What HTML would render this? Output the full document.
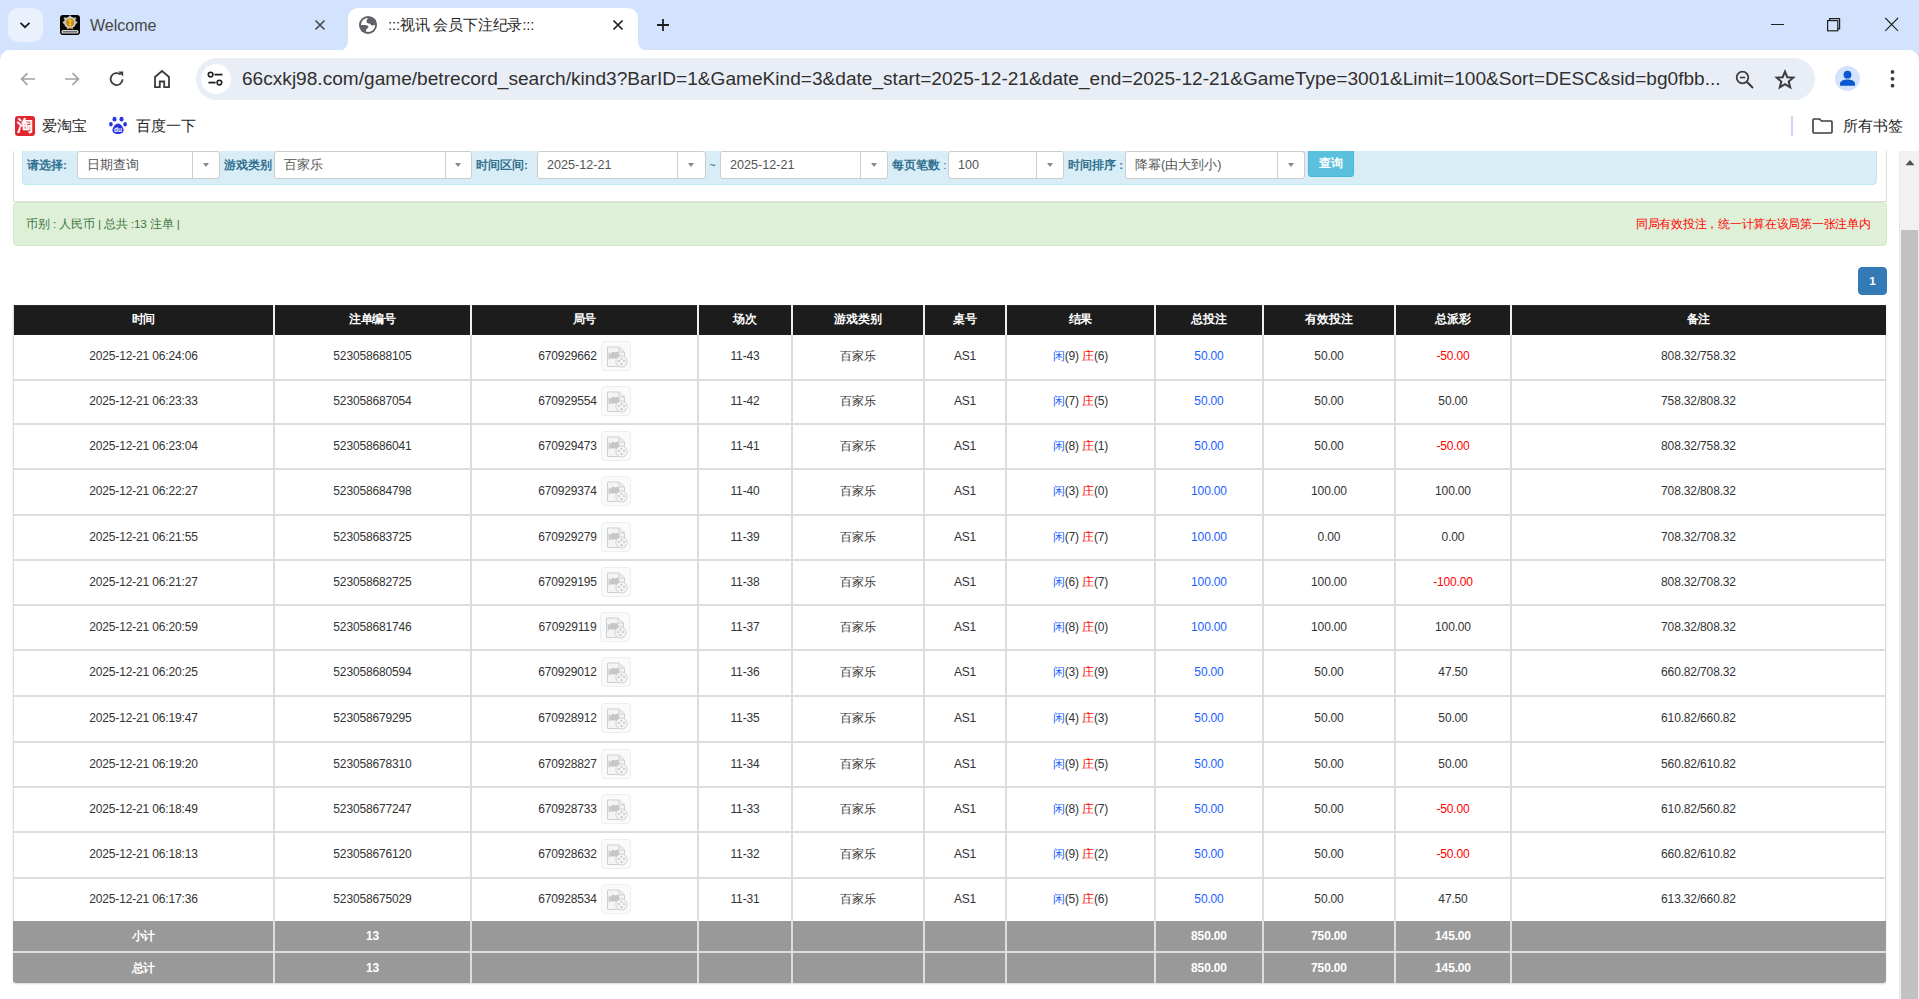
<!DOCTYPE html>
<html><head><meta charset="utf-8"><title>:::视讯 会员下注纪录:::</title>
<style>
*{box-sizing:border-box}
html,body{margin:0;padding:0}
body{width:1919px;height:999px;overflow:hidden;position:relative;background:#fff;font-family:"Liberation Sans",sans-serif;color:#333}
.a{position:absolute}
.t{position:absolute;white-space:nowrap;line-height:1}
.c{position:absolute;display:flex;align-items:center;justify-content:center;white-space:nowrap;font-size:12px;letter-spacing:-0.15px;line-height:1}
.hd{color:#fff;font-weight:bold}
.lbl{position:absolute;font-size:11.7px;font-weight:bold;color:#31708f;white-space:nowrap;line-height:1}
.sel{position:absolute;background:#fff;border:1px solid #ccc;border-radius:3px;font-size:12.6px;color:#555}
.sel span{position:absolute;left:9px;top:0;bottom:0;display:flex;align-items:center;white-space:nowrap}
.sel i{position:absolute;top:-1px;bottom:-1px;width:1px;background:#ccc}
.sel b{position:absolute;width:0;height:0;border-left:3.5px solid transparent;border-right:3.5px solid transparent;border-top:4px solid #888}
</style></head><body>

<div class="a" style="left:0;top:0;width:1919px;height:62px;background:#d3e3fd"></div>
<div class="a" style="left:8px;top:8px;width:35px;height:34px;border-radius:10px;background:#eaf1fd"></div>
<svg class="a" style="left:19px;top:19px" width="12" height="12" viewBox="0 0 12 12"><path d="M1.5 3.8 L6 8.2 L10.5 3.8" fill="none" stroke="#1f1f1f" stroke-width="1.8"/></svg>
<svg class="a" style="left:60px;top:15px" width="20" height="20" viewBox="0 0 20 20"><rect x="0" y="0" width="20" height="20" rx="3" fill="#050505"/><g fill="#c9c9c9"><circle cx="10" cy="7.5" r="6"/><rect x="9" y="0.6" width="2" height="2.5"/><rect x="2.8" y="6.5" width="2.5" height="2"/><rect x="14.7" y="6.5" width="2.5" height="2"/><rect x="4" y="2.5" width="2" height="2" transform="rotate(45 5 3.5)"/><rect x="14" y="2.5" width="2" height="2" transform="rotate(45 15 3.5)"/></g><circle cx="10" cy="7.5" r="4" fill="#c58a0c"/><path d="M8.3 5.2 Q10.8 4.6 11.2 6.4 Q9 7 10.6 8.8 Q11.6 9.8 9 10.2" fill="none" stroke="#f5d03a" stroke-width="1.2"/><circle cx="7.8" cy="13.2" r="1" fill="#e0a81a"/><circle cx="12.2" cy="13.2" r="1" fill="#e0a81a"/><rect x="1.5" y="15" width="17" height="3.5" rx="1.5" fill="#d6d6d6"/><rect x="3" y="16.2" width="14" height="1.2" fill="#555"/></svg>
<div class="t" style="left:90px;top:18px;font-size:16px;color:#474747">Welcome</div>
<svg class="a" style="left:314px;top:19px" width="12" height="12" viewBox="0 0 12 12"><path d="M1.5 1.5 L10.5 10.5 M10.5 1.5 L1.5 10.5" stroke="#474747" stroke-width="1.6"/></svg>
<div class="a" style="left:348px;top:8px;width:290px;height:43px;background:#fff;border-radius:10px 10px 0 0"></div>
<svg class="a" style="left:338px;top:40px" width="10" height="11" viewBox="0 0 10 10"><path d="M0 10 Q10 10 10 0 L10 10 Z" fill="#fff"/></svg>
<svg class="a" style="left:638px;top:40px" width="10" height="11" viewBox="0 0 10 10"><path d="M10 10 Q0 10 0 0 L0 10 Z" fill="#fff"/></svg>
<svg class="a" style="left:359px;top:16px" width="18" height="18" viewBox="0 0 18 18"><circle cx="9" cy="9" r="9" fill="#5f6368"/><circle cx="9" cy="9" r="7.1" fill="#fff"/><path d="M10.3 1.5 C8.4 2.4 7.5 3.8 7.5 5.4 C7.5 6.9 8.7 7.4 10.3 7.6 C11.3 7.8 11.6 9.3 13 9.5 C14.3 9.6 15.4 9.2 16.4 8.6 L17 4 L13 1 Z" fill="#5f6368"/><path d="M1.2 9.1 C3.5 9.1 6.3 8.9 8.1 9.4 C9.7 9.9 9.9 11.5 8.6 12.2 C7.3 12.8 6.9 13.6 6.9 16.5 L2 15 Z" fill="#5f6368"/></svg>
<div class="t" style="left:388px;top:17px;font-size:15px;color:#1f1f1f;letter-spacing:-0.2px">:::视讯 会员下注纪录:::</div>
<svg class="a" style="left:612px;top:19px" width="12" height="12" viewBox="0 0 12 12"><path d="M1.5 1.5 L10.5 10.5 M10.5 1.5 L1.5 10.5" stroke="#1f1f1f" stroke-width="1.7"/></svg>
<svg class="a" style="left:656px;top:18px" width="14" height="14" viewBox="0 0 14 14"><path d="M7 1 V13 M1 7 H13" stroke="#1f1f1f" stroke-width="1.8"/></svg>
<div class="a" style="left:1771px;top:24px;width:13px;height:1px;background:#1f1f1f"></div>
<svg class="a" style="left:1826px;top:17px" width="15" height="15" viewBox="0 0 15 15"><rect x="1.6" y="3.6" width="10.2" height="10.2" fill="none" stroke="#1f1f1f" stroke-width="1.2"/><path d="M3.6 3.6 V1.6 H13.6 V11.8 H11.8" fill="none" stroke="#1f1f1f" stroke-width="1.2"/></svg>
<svg class="a" style="left:1884px;top:17px" width="15" height="15" viewBox="0 0 15 15"><path d="M1.3 1 L14 13.8 M14 1 L1.3 13.8" stroke="#1f1f1f" stroke-width="1.1"/></svg>
<div class="a" style="left:0;top:50px;width:1919px;height:101px;background:#fff;border-radius:10px 10px 0 0"></div>
<svg class="a" style="left:19px;top:70px" width="18" height="18" viewBox="0 0 18 18"><path d="M16 9 H3 M8.5 3.2 L2.6 9 L8.5 14.8" fill="none" stroke="#a3a3a3" stroke-width="1.7"/></svg>
<svg class="a" style="left:63px;top:70px" width="18" height="18" viewBox="0 0 18 18"><path d="M2 9 H15 M9.5 3.2 L15.4 9 L9.5 14.8" fill="none" stroke="#a3a3a3" stroke-width="1.7"/></svg>
<svg class="a" style="left:108px;top:70px" width="18" height="18" viewBox="0 0 18 18"><path d="M14.6 9.2 A6 6 0 1 1 12.6 4.6" fill="none" stroke="#3c3c3c" stroke-width="1.8"/><path d="M10.2 1.6 H15.2 V6.6 Z" fill="#3c3c3c"/></svg>
<svg class="a" style="left:153px;top:69px" width="18" height="20" viewBox="0 0 18 20"><path d="M2 18.2 V8 L9 2 L16 8 V18.2 H11.2 V12.5 H6.8 V18.2 Z" fill="none" stroke="#3c3c3c" stroke-width="1.8" stroke-linejoin="miter"/></svg>
<div class="a" style="left:196px;top:58px;width:1619px;height:42px;border-radius:21px;background:#e9eef6"></div>
<div class="a" style="left:201px;top:64px;width:30px;height:30px;border-radius:50%;background:#fff"></div>
<svg class="a" style="left:207px;top:71px" width="18" height="16" viewBox="0 0 18 16"><circle cx="3.6" cy="3.6" r="2.3" fill="none" stroke="#1f1f1f" stroke-width="1.6"/><path d="M7.5 3.6 H15.5" stroke="#1f1f1f" stroke-width="1.8"/><circle cx="12.4" cy="11.6" r="2.3" fill="none" stroke="#1f1f1f" stroke-width="1.6"/><path d="M1.5 11.6 H8.6" stroke="#1f1f1f" stroke-width="1.8"/></svg>
<div class="t" style="left:242px;top:69px;font-size:19.1px;color:#303030">66cxkj98.com/game/betrecord_search/kind3?BarID=1&amp;GameKind=3&amp;date_start=2025-12-21&amp;date_end=2025-12-21&amp;GameType=3001&amp;Limit=100&amp;Sort=DESC&amp;sid=bg0fbb...</div>
<svg class="a" style="left:1735px;top:70px" width="20" height="20" viewBox="0 0 20 20"><circle cx="7.5" cy="7.5" r="5.8" fill="none" stroke="#3c3c3c" stroke-width="1.8"/><path d="M4.8 7.5 H10.2" stroke="#3c3c3c" stroke-width="1.6"/><path d="M11.8 11.8 L18 18" stroke="#3c3c3c" stroke-width="2"/></svg>
<svg class="a" style="left:1774px;top:69px" width="22" height="21" viewBox="0 0 22 21"><path d="M11 2.6 L13.3 8.2 L19.3 8.6 L14.7 12.5 L16.2 18.4 L11 15.2 L5.8 18.4 L7.3 12.5 L2.7 8.6 L8.7 8.2 Z" fill="none" stroke="#3c3c3c" stroke-width="2" stroke-linejoin="miter"/></svg>
<div class="a" style="left:1835px;top:66px;width:25px;height:25px;border-radius:50%;background:#d3e3fd"></div>
<svg class="a" style="left:1839px;top:70px" width="17" height="17" viewBox="0 0 17 17"><circle cx="8.5" cy="4.7" r="3.9" fill="#0b57d0"/><path d="M1 15.7 V13.6 C1 10.8 5 9.4 8.5 9.4 C12 9.4 16 10.8 16 13.6 V15.7 Z" fill="#0b57d0"/></svg>
<svg class="a" style="left:1888px;top:69px" width="9" height="20" viewBox="0 0 9 20"><circle cx="4.5" cy="2.9" r="1.9" fill="#3c3c3c"/><circle cx="4.5" cy="9.8" r="1.9" fill="#3c3c3c"/><circle cx="4.5" cy="16.7" r="1.9" fill="#3c3c3c"/></svg>
<div class="a" style="left:15px;top:116px;width:20px;height:20px;border-radius:3px;background:#e0262e"></div>
<div class="t" style="left:16px;top:117px;font-size:16px;color:#fff;font-weight:bold;width:18px;text-align:center;line-height:18px">淘</div>
<div class="t" style="left:42px;top:118px;font-size:15px;color:#1f1f1f">爱淘宝</div>
<svg class="a" style="left:109px;top:116px" width="18" height="19" viewBox="0 0 18 19"><ellipse cx="5.5" cy="3.2" rx="2" ry="2.4" fill="#2932e1"/><ellipse cx="12.5" cy="3.2" rx="2" ry="2.4" fill="#2932e1"/><ellipse cx="1.9" cy="8.2" rx="1.8" ry="2.2" fill="#2932e1"/><ellipse cx="16.1" cy="8.2" rx="1.8" ry="2.2" fill="#2932e1"/><path d="M9 7.5 C6.5 7.5 4 11 3.5 13.5 C3 16.5 5.5 18 9 18 C12.5 18 15 16.5 14.5 13.5 C14 11 11.5 7.5 9 7.5 Z" fill="#2932e1"/><text x="9" y="16.3" font-size="6.5" font-family="Liberation Sans" font-weight="bold" fill="#fff" text-anchor="middle">du</text></svg>
<div class="t" style="left:136px;top:118px;font-size:15px;color:#1f1f1f">百度一下</div>
<div class="a" style="left:1791px;top:116px;width:2px;height:20px;background:#c7d7f5"></div>
<svg class="a" style="left:1812px;top:118px" width="21" height="16" viewBox="0 0 21 16"><path d="M1 2 Q1 1 2 1 H7.5 L9.5 3 H19 Q20 3 20 4 V14 Q20 15 19 15 H2 Q1 15 1 14 Z" fill="none" stroke="#3c3c3c" stroke-width="1.6"/></svg>
<div class="t" style="left:1843px;top:118px;font-size:15px;color:#1f1f1f">所有书签</div>
<div class="a" style="left:0;top:151px;width:1919px;height:848px;overflow:hidden">
<div class="a" style="left:13px;top:-21px;width:1874px;height:72px;border:1px solid #ddd;border-radius:0"></div>
<div class="a" style="left:22px;top:-21px;width:1855px;height:55px;background:#d9edf7;border:1px solid #bce8f1;border-radius:4px"></div>
<div class="lbl" style="left:27px;top:8px">请选择:</div>
<div class="sel" style="left:77px;top:0px;width:143px;height:28px"><span>日期查询</span><i style="left:114px"></i><b style="left:124.5px;top:11px"></b></div>
<div class="lbl" style="left:224px;top:8px">游戏类别</div>
<div class="sel" style="left:274px;top:0px;width:198px;height:28px"><span>百家乐</span><i style="left:170px"></i><b style="left:180.0px;top:11px"></b></div>
<div class="lbl" style="left:476px;top:8px">时间区间:</div>
<div class="sel" style="left:537px;top:0px;width:169px;height:28px"><span>2025-12-21</span><i style="left:139px"></i><b style="left:150.0px;top:11px"></b></div>
<div class="t" style="left:709px;top:8px;font-size:11.7px;color:#31708f">~</div>
<div class="sel" style="left:720px;top:0px;width:168px;height:28px"><span>2025-12-21</span><i style="left:139px"></i><b style="left:149.5px;top:11px"></b></div>
<div class="lbl" style="left:892px;top:8px">每页笔数<span style="font-weight:normal"> :</span></div>
<div class="sel" style="left:948px;top:0px;width:116px;height:28px"><span>100</span><i style="left:87px"></i><b style="left:97.5px;top:11px"></b></div>
<div class="lbl" style="left:1068px;top:8px">时间排序 :</div>
<div class="sel" style="left:1125px;top:0px;width:180px;height:28px"><span>降幂(由大到小)</span><i style="left:151px"></i><b style="left:161.5px;top:11px"></b></div>
<div class="a" style="left:1308px;top:-11px;width:46px;height:37px;background:#5bc0de;border:1px solid #46b8da;border-radius:3px"></div>
<div class="t" style="left:1319px;top:6px;font-size:11.7px;font-weight:bold;color:#fff">查询</div>
<div class="a" style="left:13px;top:51px;width:1874px;height:44px;background:#dff0d8;border:1px solid #d6e9c6;border-radius:4px"></div>
<div class="t" style="left:26px;top:67px;font-size:11.7px;letter-spacing:-0.12px;color:#3c763d">币别 : 人民币 | 总共 :13 注单 |</div>
<div class="t" style="left:1636px;top:67px;font-size:11.7px;letter-spacing:-0.27px;color:#ff0000">同局有效投注，统一计算在该局第一张注单内</div>
<div class="a" style="left:1858px;top:116px;width:29px;height:28px;background:#337ab7;border:1px solid #337ab7;border-radius:4px;color:#fff;font-weight:bold;font-size:11.7px;display:flex;align-items:center;justify-content:center;padding-bottom:2px">1</div>
<div class="a" style="left:13px;top:154px;width:1873px;height:678px;background:#fff;border-left:1px solid #ddd;border-right:1px solid #ddd;border-radius:0 0 3px 3px;box-shadow:0 1px 2px rgba(0,0,0,.15)"></div>
<div class="a" style="left:14px;top:154px;width:1872px;height:30px;background:#1c1c1c;box-shadow:inset 0 1px 0 #2c2c2c"></div>
<div class="a" style="left:273px;top:154px;width:2px;height:30px;background:#eee"></div>
<div class="a" style="left:470px;top:154px;width:2px;height:30px;background:#eee"></div>
<div class="a" style="left:697px;top:154px;width:2px;height:30px;background:#eee"></div>
<div class="a" style="left:791px;top:154px;width:2px;height:30px;background:#eee"></div>
<div class="a" style="left:923px;top:154px;width:2px;height:30px;background:#eee"></div>
<div class="a" style="left:1005px;top:154px;width:2px;height:30px;background:#eee"></div>
<div class="a" style="left:1154px;top:154px;width:2px;height:30px;background:#eee"></div>
<div class="a" style="left:1262px;top:154px;width:2px;height:30px;background:#eee"></div>
<div class="a" style="left:1394px;top:154px;width:2px;height:30px;background:#eee"></div>
<div class="a" style="left:1510px;top:154px;width:2px;height:30px;background:#eee"></div>
<div class="c hd" style="left:14px;top:154px;width:259px;height:30px;padding-bottom:2px">时间</div>
<div class="c hd" style="left:275px;top:154px;width:195px;height:30px;padding-bottom:2px">注单编号</div>
<div class="c hd" style="left:472px;top:154px;width:225px;height:30px;padding-bottom:2px">局号</div>
<div class="c hd" style="left:699px;top:154px;width:92px;height:30px;padding-bottom:2px">场次</div>
<div class="c hd" style="left:793px;top:154px;width:130px;height:30px;padding-bottom:2px">游戏类别</div>
<div class="c hd" style="left:925px;top:154px;width:80px;height:30px;padding-bottom:2px">桌号</div>
<div class="c hd" style="left:1007px;top:154px;width:147px;height:30px;padding-bottom:2px">结果</div>
<div class="c hd" style="left:1156px;top:154px;width:106px;height:30px;padding-bottom:2px">总投注</div>
<div class="c hd" style="left:1264px;top:154px;width:130px;height:30px;padding-bottom:2px">有效投注</div>
<div class="c hd" style="left:1396px;top:154px;width:114px;height:30px;padding-bottom:2px">总派彩</div>
<div class="c hd" style="left:1512px;top:154px;width:373px;height:30px;padding-bottom:2px">备注</div>
<div class="a" style="left:13px;top:228px;width:1873px;height:2px;background:#ddd"></div>
<div class="a" style="left:13px;top:272px;width:1873px;height:2px;background:#ddd"></div>
<div class="a" style="left:13px;top:317px;width:1873px;height:2px;background:#ddd"></div>
<div class="a" style="left:13px;top:363px;width:1873px;height:2px;background:#ddd"></div>
<div class="a" style="left:13px;top:408px;width:1873px;height:2px;background:#ddd"></div>
<div class="a" style="left:13px;top:453px;width:1873px;height:2px;background:#ddd"></div>
<div class="a" style="left:13px;top:498px;width:1873px;height:2px;background:#ddd"></div>
<div class="a" style="left:13px;top:544px;width:1873px;height:2px;background:#ddd"></div>
<div class="a" style="left:13px;top:590px;width:1873px;height:2px;background:#ddd"></div>
<div class="a" style="left:13px;top:635px;width:1873px;height:2px;background:#ddd"></div>
<div class="a" style="left:13px;top:680px;width:1873px;height:2px;background:#ddd"></div>
<div class="a" style="left:13px;top:726px;width:1873px;height:2px;background:#ddd"></div>
<div class="a" style="left:273px;top:184px;width:2px;height:648px;background:#ddd"></div>
<div class="a" style="left:470px;top:184px;width:2px;height:648px;background:#ddd"></div>
<div class="a" style="left:697px;top:184px;width:2px;height:648px;background:#ddd"></div>
<div class="a" style="left:791px;top:184px;width:2px;height:648px;background:#ddd"></div>
<div class="a" style="left:923px;top:184px;width:2px;height:648px;background:#ddd"></div>
<div class="a" style="left:1005px;top:184px;width:2px;height:648px;background:#ddd"></div>
<div class="a" style="left:1154px;top:184px;width:2px;height:648px;background:#ddd"></div>
<div class="a" style="left:1262px;top:184px;width:2px;height:648px;background:#ddd"></div>
<div class="a" style="left:1394px;top:184px;width:2px;height:648px;background:#ddd"></div>
<div class="a" style="left:1510px;top:184px;width:2px;height:648px;background:#ddd"></div>
<div class="c" style="left:14px;top:184px;width:259px;height:44px;padding-bottom:2px;color:#333">2025-12-21 06:24:06</div>
<div class="c" style="left:275px;top:184px;width:195px;height:44px;padding-bottom:2px;color:#333">523058688105</div>
<div class="c" style="left:472px;top:184px;width:225px;height:44px;padding-bottom:2px"><span>670929662</span><span style="display:inline-block;position:relative;width:30px;height:30px;margin-left:4px;border:1px solid #eee;border-radius:4px;background:#fafafa"><svg style="position:absolute;left:4px;top:4px" width="22" height="22" viewBox="0 0 22 22"><path d="M1.5 1 H13 L18.5 6 V20.5 H1.5 Z" fill="#f4f4f4" stroke="#cfcfcf" stroke-width="1"/><path d="M13 1 V6 H18.5" fill="none" stroke="#cfcfcf" stroke-width="1"/><rect x="4.5" y="7.5" width="9" height="5" fill="#c6c6c6"/><path d="M2.6 6.2 L4.6 8 V12 L2.6 13.8 Z" fill="#c6c6c6"/><rect x="5.5" y="6" width="3.3" height="2" fill="#c6c6c6"/><rect x="9.3" y="6" width="3.3" height="2" fill="#c6c6c6"/><circle cx="15.5" cy="15.5" r="5.6" fill="#f4f4f4" stroke="#d0d0d0" stroke-width="1"/><circle cx="15.5" cy="12.8" r="1.1" fill="#c8c8c8"/><circle cx="15.5" cy="18.2" r="1.1" fill="#c8c8c8"/><circle cx="12.9" cy="15" r="1.1" fill="#c8c8c8"/><circle cx="18.1" cy="15" r="1.1" fill="#c8c8c8"/></svg></span></div>
<div class="c" style="left:699px;top:184px;width:92px;height:44px;padding-bottom:2px;color:#333">11-43</div>
<div class="c" style="left:793px;top:184px;width:130px;height:44px;padding-bottom:2px;color:#333">百家乐</div>
<div class="c" style="left:925px;top:184px;width:80px;height:44px;padding-bottom:2px;color:#333">AS1</div>
<div class="c" style="left:1007px;top:184px;width:147px;height:44px;padding-bottom:2px"><span style="color:#1a5fff">闲</span>(9)&nbsp;<span style="color:#ff0000">庄</span>(6)</div>
<div class="c" style="left:1156px;top:184px;width:106px;height:44px;padding-bottom:2px;color:#1a5fff">50.00</div>
<div class="c" style="left:1264px;top:184px;width:130px;height:44px;padding-bottom:2px;color:#333">50.00</div>
<div class="c" style="left:1396px;top:184px;width:114px;height:44px;padding-bottom:2px;color:#ff0000">-50.00</div>
<div class="c" style="left:1512px;top:184px;width:373px;height:44px;padding-bottom:2px;color:#333">808.32/758.32</div>
<div class="c" style="left:14px;top:230px;width:259px;height:42px;padding-bottom:2px;color:#333">2025-12-21 06:23:33</div>
<div class="c" style="left:275px;top:230px;width:195px;height:42px;padding-bottom:2px;color:#333">523058687054</div>
<div class="c" style="left:472px;top:230px;width:225px;height:42px;padding-bottom:2px"><span>670929554</span><span style="display:inline-block;position:relative;width:30px;height:30px;margin-left:4px;border:1px solid #eee;border-radius:4px;background:#fafafa"><svg style="position:absolute;left:4px;top:4px" width="22" height="22" viewBox="0 0 22 22"><path d="M1.5 1 H13 L18.5 6 V20.5 H1.5 Z" fill="#f4f4f4" stroke="#cfcfcf" stroke-width="1"/><path d="M13 1 V6 H18.5" fill="none" stroke="#cfcfcf" stroke-width="1"/><rect x="4.5" y="7.5" width="9" height="5" fill="#c6c6c6"/><path d="M2.6 6.2 L4.6 8 V12 L2.6 13.8 Z" fill="#c6c6c6"/><rect x="5.5" y="6" width="3.3" height="2" fill="#c6c6c6"/><rect x="9.3" y="6" width="3.3" height="2" fill="#c6c6c6"/><circle cx="15.5" cy="15.5" r="5.6" fill="#f4f4f4" stroke="#d0d0d0" stroke-width="1"/><circle cx="15.5" cy="12.8" r="1.1" fill="#c8c8c8"/><circle cx="15.5" cy="18.2" r="1.1" fill="#c8c8c8"/><circle cx="12.9" cy="15" r="1.1" fill="#c8c8c8"/><circle cx="18.1" cy="15" r="1.1" fill="#c8c8c8"/></svg></span></div>
<div class="c" style="left:699px;top:230px;width:92px;height:42px;padding-bottom:2px;color:#333">11-42</div>
<div class="c" style="left:793px;top:230px;width:130px;height:42px;padding-bottom:2px;color:#333">百家乐</div>
<div class="c" style="left:925px;top:230px;width:80px;height:42px;padding-bottom:2px;color:#333">AS1</div>
<div class="c" style="left:1007px;top:230px;width:147px;height:42px;padding-bottom:2px"><span style="color:#1a5fff">闲</span>(7)&nbsp;<span style="color:#ff0000">庄</span>(5)</div>
<div class="c" style="left:1156px;top:230px;width:106px;height:42px;padding-bottom:2px;color:#1a5fff">50.00</div>
<div class="c" style="left:1264px;top:230px;width:130px;height:42px;padding-bottom:2px;color:#333">50.00</div>
<div class="c" style="left:1396px;top:230px;width:114px;height:42px;padding-bottom:2px;color:#333">50.00</div>
<div class="c" style="left:1512px;top:230px;width:373px;height:42px;padding-bottom:2px;color:#333">758.32/808.32</div>
<div class="c" style="left:14px;top:274px;width:259px;height:43px;padding-bottom:2px;color:#333">2025-12-21 06:23:04</div>
<div class="c" style="left:275px;top:274px;width:195px;height:43px;padding-bottom:2px;color:#333">523058686041</div>
<div class="c" style="left:472px;top:274px;width:225px;height:43px;padding-bottom:2px"><span>670929473</span><span style="display:inline-block;position:relative;width:30px;height:30px;margin-left:4px;border:1px solid #eee;border-radius:4px;background:#fafafa"><svg style="position:absolute;left:4px;top:4px" width="22" height="22" viewBox="0 0 22 22"><path d="M1.5 1 H13 L18.5 6 V20.5 H1.5 Z" fill="#f4f4f4" stroke="#cfcfcf" stroke-width="1"/><path d="M13 1 V6 H18.5" fill="none" stroke="#cfcfcf" stroke-width="1"/><rect x="4.5" y="7.5" width="9" height="5" fill="#c6c6c6"/><path d="M2.6 6.2 L4.6 8 V12 L2.6 13.8 Z" fill="#c6c6c6"/><rect x="5.5" y="6" width="3.3" height="2" fill="#c6c6c6"/><rect x="9.3" y="6" width="3.3" height="2" fill="#c6c6c6"/><circle cx="15.5" cy="15.5" r="5.6" fill="#f4f4f4" stroke="#d0d0d0" stroke-width="1"/><circle cx="15.5" cy="12.8" r="1.1" fill="#c8c8c8"/><circle cx="15.5" cy="18.2" r="1.1" fill="#c8c8c8"/><circle cx="12.9" cy="15" r="1.1" fill="#c8c8c8"/><circle cx="18.1" cy="15" r="1.1" fill="#c8c8c8"/></svg></span></div>
<div class="c" style="left:699px;top:274px;width:92px;height:43px;padding-bottom:2px;color:#333">11-41</div>
<div class="c" style="left:793px;top:274px;width:130px;height:43px;padding-bottom:2px;color:#333">百家乐</div>
<div class="c" style="left:925px;top:274px;width:80px;height:43px;padding-bottom:2px;color:#333">AS1</div>
<div class="c" style="left:1007px;top:274px;width:147px;height:43px;padding-bottom:2px"><span style="color:#1a5fff">闲</span>(8)&nbsp;<span style="color:#ff0000">庄</span>(1)</div>
<div class="c" style="left:1156px;top:274px;width:106px;height:43px;padding-bottom:2px;color:#1a5fff">50.00</div>
<div class="c" style="left:1264px;top:274px;width:130px;height:43px;padding-bottom:2px;color:#333">50.00</div>
<div class="c" style="left:1396px;top:274px;width:114px;height:43px;padding-bottom:2px;color:#ff0000">-50.00</div>
<div class="c" style="left:1512px;top:274px;width:373px;height:43px;padding-bottom:2px;color:#333">808.32/758.32</div>
<div class="c" style="left:14px;top:319px;width:259px;height:44px;padding-bottom:2px;color:#333">2025-12-21 06:22:27</div>
<div class="c" style="left:275px;top:319px;width:195px;height:44px;padding-bottom:2px;color:#333">523058684798</div>
<div class="c" style="left:472px;top:319px;width:225px;height:44px;padding-bottom:2px"><span>670929374</span><span style="display:inline-block;position:relative;width:30px;height:30px;margin-left:4px;border:1px solid #eee;border-radius:4px;background:#fafafa"><svg style="position:absolute;left:4px;top:4px" width="22" height="22" viewBox="0 0 22 22"><path d="M1.5 1 H13 L18.5 6 V20.5 H1.5 Z" fill="#f4f4f4" stroke="#cfcfcf" stroke-width="1"/><path d="M13 1 V6 H18.5" fill="none" stroke="#cfcfcf" stroke-width="1"/><rect x="4.5" y="7.5" width="9" height="5" fill="#c6c6c6"/><path d="M2.6 6.2 L4.6 8 V12 L2.6 13.8 Z" fill="#c6c6c6"/><rect x="5.5" y="6" width="3.3" height="2" fill="#c6c6c6"/><rect x="9.3" y="6" width="3.3" height="2" fill="#c6c6c6"/><circle cx="15.5" cy="15.5" r="5.6" fill="#f4f4f4" stroke="#d0d0d0" stroke-width="1"/><circle cx="15.5" cy="12.8" r="1.1" fill="#c8c8c8"/><circle cx="15.5" cy="18.2" r="1.1" fill="#c8c8c8"/><circle cx="12.9" cy="15" r="1.1" fill="#c8c8c8"/><circle cx="18.1" cy="15" r="1.1" fill="#c8c8c8"/></svg></span></div>
<div class="c" style="left:699px;top:319px;width:92px;height:44px;padding-bottom:2px;color:#333">11-40</div>
<div class="c" style="left:793px;top:319px;width:130px;height:44px;padding-bottom:2px;color:#333">百家乐</div>
<div class="c" style="left:925px;top:319px;width:80px;height:44px;padding-bottom:2px;color:#333">AS1</div>
<div class="c" style="left:1007px;top:319px;width:147px;height:44px;padding-bottom:2px"><span style="color:#1a5fff">闲</span>(3)&nbsp;<span style="color:#ff0000">庄</span>(0)</div>
<div class="c" style="left:1156px;top:319px;width:106px;height:44px;padding-bottom:2px;color:#1a5fff">100.00</div>
<div class="c" style="left:1264px;top:319px;width:130px;height:44px;padding-bottom:2px;color:#333">100.00</div>
<div class="c" style="left:1396px;top:319px;width:114px;height:44px;padding-bottom:2px;color:#333">100.00</div>
<div class="c" style="left:1512px;top:319px;width:373px;height:44px;padding-bottom:2px;color:#333">708.32/808.32</div>
<div class="c" style="left:14px;top:365px;width:259px;height:43px;padding-bottom:2px;color:#333">2025-12-21 06:21:55</div>
<div class="c" style="left:275px;top:365px;width:195px;height:43px;padding-bottom:2px;color:#333">523058683725</div>
<div class="c" style="left:472px;top:365px;width:225px;height:43px;padding-bottom:2px"><span>670929279</span><span style="display:inline-block;position:relative;width:30px;height:30px;margin-left:4px;border:1px solid #eee;border-radius:4px;background:#fafafa"><svg style="position:absolute;left:4px;top:4px" width="22" height="22" viewBox="0 0 22 22"><path d="M1.5 1 H13 L18.5 6 V20.5 H1.5 Z" fill="#f4f4f4" stroke="#cfcfcf" stroke-width="1"/><path d="M13 1 V6 H18.5" fill="none" stroke="#cfcfcf" stroke-width="1"/><rect x="4.5" y="7.5" width="9" height="5" fill="#c6c6c6"/><path d="M2.6 6.2 L4.6 8 V12 L2.6 13.8 Z" fill="#c6c6c6"/><rect x="5.5" y="6" width="3.3" height="2" fill="#c6c6c6"/><rect x="9.3" y="6" width="3.3" height="2" fill="#c6c6c6"/><circle cx="15.5" cy="15.5" r="5.6" fill="#f4f4f4" stroke="#d0d0d0" stroke-width="1"/><circle cx="15.5" cy="12.8" r="1.1" fill="#c8c8c8"/><circle cx="15.5" cy="18.2" r="1.1" fill="#c8c8c8"/><circle cx="12.9" cy="15" r="1.1" fill="#c8c8c8"/><circle cx="18.1" cy="15" r="1.1" fill="#c8c8c8"/></svg></span></div>
<div class="c" style="left:699px;top:365px;width:92px;height:43px;padding-bottom:2px;color:#333">11-39</div>
<div class="c" style="left:793px;top:365px;width:130px;height:43px;padding-bottom:2px;color:#333">百家乐</div>
<div class="c" style="left:925px;top:365px;width:80px;height:43px;padding-bottom:2px;color:#333">AS1</div>
<div class="c" style="left:1007px;top:365px;width:147px;height:43px;padding-bottom:2px"><span style="color:#1a5fff">闲</span>(7)&nbsp;<span style="color:#ff0000">庄</span>(7)</div>
<div class="c" style="left:1156px;top:365px;width:106px;height:43px;padding-bottom:2px;color:#1a5fff">100.00</div>
<div class="c" style="left:1264px;top:365px;width:130px;height:43px;padding-bottom:2px;color:#333">0.00</div>
<div class="c" style="left:1396px;top:365px;width:114px;height:43px;padding-bottom:2px;color:#333">0.00</div>
<div class="c" style="left:1512px;top:365px;width:373px;height:43px;padding-bottom:2px;color:#333">708.32/708.32</div>
<div class="c" style="left:14px;top:410px;width:259px;height:43px;padding-bottom:2px;color:#333">2025-12-21 06:21:27</div>
<div class="c" style="left:275px;top:410px;width:195px;height:43px;padding-bottom:2px;color:#333">523058682725</div>
<div class="c" style="left:472px;top:410px;width:225px;height:43px;padding-bottom:2px"><span>670929195</span><span style="display:inline-block;position:relative;width:30px;height:30px;margin-left:4px;border:1px solid #eee;border-radius:4px;background:#fafafa"><svg style="position:absolute;left:4px;top:4px" width="22" height="22" viewBox="0 0 22 22"><path d="M1.5 1 H13 L18.5 6 V20.5 H1.5 Z" fill="#f4f4f4" stroke="#cfcfcf" stroke-width="1"/><path d="M13 1 V6 H18.5" fill="none" stroke="#cfcfcf" stroke-width="1"/><rect x="4.5" y="7.5" width="9" height="5" fill="#c6c6c6"/><path d="M2.6 6.2 L4.6 8 V12 L2.6 13.8 Z" fill="#c6c6c6"/><rect x="5.5" y="6" width="3.3" height="2" fill="#c6c6c6"/><rect x="9.3" y="6" width="3.3" height="2" fill="#c6c6c6"/><circle cx="15.5" cy="15.5" r="5.6" fill="#f4f4f4" stroke="#d0d0d0" stroke-width="1"/><circle cx="15.5" cy="12.8" r="1.1" fill="#c8c8c8"/><circle cx="15.5" cy="18.2" r="1.1" fill="#c8c8c8"/><circle cx="12.9" cy="15" r="1.1" fill="#c8c8c8"/><circle cx="18.1" cy="15" r="1.1" fill="#c8c8c8"/></svg></span></div>
<div class="c" style="left:699px;top:410px;width:92px;height:43px;padding-bottom:2px;color:#333">11-38</div>
<div class="c" style="left:793px;top:410px;width:130px;height:43px;padding-bottom:2px;color:#333">百家乐</div>
<div class="c" style="left:925px;top:410px;width:80px;height:43px;padding-bottom:2px;color:#333">AS1</div>
<div class="c" style="left:1007px;top:410px;width:147px;height:43px;padding-bottom:2px"><span style="color:#1a5fff">闲</span>(6)&nbsp;<span style="color:#ff0000">庄</span>(7)</div>
<div class="c" style="left:1156px;top:410px;width:106px;height:43px;padding-bottom:2px;color:#1a5fff">100.00</div>
<div class="c" style="left:1264px;top:410px;width:130px;height:43px;padding-bottom:2px;color:#333">100.00</div>
<div class="c" style="left:1396px;top:410px;width:114px;height:43px;padding-bottom:2px;color:#ff0000">-100.00</div>
<div class="c" style="left:1512px;top:410px;width:373px;height:43px;padding-bottom:2px;color:#333">808.32/708.32</div>
<div class="c" style="left:14px;top:455px;width:259px;height:43px;padding-bottom:2px;color:#333">2025-12-21 06:20:59</div>
<div class="c" style="left:275px;top:455px;width:195px;height:43px;padding-bottom:2px;color:#333">523058681746</div>
<div class="c" style="left:472px;top:455px;width:225px;height:43px;padding-bottom:2px"><span>670929119</span><span style="display:inline-block;position:relative;width:30px;height:30px;margin-left:4px;border:1px solid #eee;border-radius:4px;background:#fafafa"><svg style="position:absolute;left:4px;top:4px" width="22" height="22" viewBox="0 0 22 22"><path d="M1.5 1 H13 L18.5 6 V20.5 H1.5 Z" fill="#f4f4f4" stroke="#cfcfcf" stroke-width="1"/><path d="M13 1 V6 H18.5" fill="none" stroke="#cfcfcf" stroke-width="1"/><rect x="4.5" y="7.5" width="9" height="5" fill="#c6c6c6"/><path d="M2.6 6.2 L4.6 8 V12 L2.6 13.8 Z" fill="#c6c6c6"/><rect x="5.5" y="6" width="3.3" height="2" fill="#c6c6c6"/><rect x="9.3" y="6" width="3.3" height="2" fill="#c6c6c6"/><circle cx="15.5" cy="15.5" r="5.6" fill="#f4f4f4" stroke="#d0d0d0" stroke-width="1"/><circle cx="15.5" cy="12.8" r="1.1" fill="#c8c8c8"/><circle cx="15.5" cy="18.2" r="1.1" fill="#c8c8c8"/><circle cx="12.9" cy="15" r="1.1" fill="#c8c8c8"/><circle cx="18.1" cy="15" r="1.1" fill="#c8c8c8"/></svg></span></div>
<div class="c" style="left:699px;top:455px;width:92px;height:43px;padding-bottom:2px;color:#333">11-37</div>
<div class="c" style="left:793px;top:455px;width:130px;height:43px;padding-bottom:2px;color:#333">百家乐</div>
<div class="c" style="left:925px;top:455px;width:80px;height:43px;padding-bottom:2px;color:#333">AS1</div>
<div class="c" style="left:1007px;top:455px;width:147px;height:43px;padding-bottom:2px"><span style="color:#1a5fff">闲</span>(8)&nbsp;<span style="color:#ff0000">庄</span>(0)</div>
<div class="c" style="left:1156px;top:455px;width:106px;height:43px;padding-bottom:2px;color:#1a5fff">100.00</div>
<div class="c" style="left:1264px;top:455px;width:130px;height:43px;padding-bottom:2px;color:#333">100.00</div>
<div class="c" style="left:1396px;top:455px;width:114px;height:43px;padding-bottom:2px;color:#333">100.00</div>
<div class="c" style="left:1512px;top:455px;width:373px;height:43px;padding-bottom:2px;color:#333">708.32/808.32</div>
<div class="c" style="left:14px;top:500px;width:259px;height:44px;padding-bottom:2px;color:#333">2025-12-21 06:20:25</div>
<div class="c" style="left:275px;top:500px;width:195px;height:44px;padding-bottom:2px;color:#333">523058680594</div>
<div class="c" style="left:472px;top:500px;width:225px;height:44px;padding-bottom:2px"><span>670929012</span><span style="display:inline-block;position:relative;width:30px;height:30px;margin-left:4px;border:1px solid #eee;border-radius:4px;background:#fafafa"><svg style="position:absolute;left:4px;top:4px" width="22" height="22" viewBox="0 0 22 22"><path d="M1.5 1 H13 L18.5 6 V20.5 H1.5 Z" fill="#f4f4f4" stroke="#cfcfcf" stroke-width="1"/><path d="M13 1 V6 H18.5" fill="none" stroke="#cfcfcf" stroke-width="1"/><rect x="4.5" y="7.5" width="9" height="5" fill="#c6c6c6"/><path d="M2.6 6.2 L4.6 8 V12 L2.6 13.8 Z" fill="#c6c6c6"/><rect x="5.5" y="6" width="3.3" height="2" fill="#c6c6c6"/><rect x="9.3" y="6" width="3.3" height="2" fill="#c6c6c6"/><circle cx="15.5" cy="15.5" r="5.6" fill="#f4f4f4" stroke="#d0d0d0" stroke-width="1"/><circle cx="15.5" cy="12.8" r="1.1" fill="#c8c8c8"/><circle cx="15.5" cy="18.2" r="1.1" fill="#c8c8c8"/><circle cx="12.9" cy="15" r="1.1" fill="#c8c8c8"/><circle cx="18.1" cy="15" r="1.1" fill="#c8c8c8"/></svg></span></div>
<div class="c" style="left:699px;top:500px;width:92px;height:44px;padding-bottom:2px;color:#333">11-36</div>
<div class="c" style="left:793px;top:500px;width:130px;height:44px;padding-bottom:2px;color:#333">百家乐</div>
<div class="c" style="left:925px;top:500px;width:80px;height:44px;padding-bottom:2px;color:#333">AS1</div>
<div class="c" style="left:1007px;top:500px;width:147px;height:44px;padding-bottom:2px"><span style="color:#1a5fff">闲</span>(3)&nbsp;<span style="color:#ff0000">庄</span>(9)</div>
<div class="c" style="left:1156px;top:500px;width:106px;height:44px;padding-bottom:2px;color:#1a5fff">50.00</div>
<div class="c" style="left:1264px;top:500px;width:130px;height:44px;padding-bottom:2px;color:#333">50.00</div>
<div class="c" style="left:1396px;top:500px;width:114px;height:44px;padding-bottom:2px;color:#333">47.50</div>
<div class="c" style="left:1512px;top:500px;width:373px;height:44px;padding-bottom:2px;color:#333">660.82/708.32</div>
<div class="c" style="left:14px;top:546px;width:259px;height:44px;padding-bottom:2px;color:#333">2025-12-21 06:19:47</div>
<div class="c" style="left:275px;top:546px;width:195px;height:44px;padding-bottom:2px;color:#333">523058679295</div>
<div class="c" style="left:472px;top:546px;width:225px;height:44px;padding-bottom:2px"><span>670928912</span><span style="display:inline-block;position:relative;width:30px;height:30px;margin-left:4px;border:1px solid #eee;border-radius:4px;background:#fafafa"><svg style="position:absolute;left:4px;top:4px" width="22" height="22" viewBox="0 0 22 22"><path d="M1.5 1 H13 L18.5 6 V20.5 H1.5 Z" fill="#f4f4f4" stroke="#cfcfcf" stroke-width="1"/><path d="M13 1 V6 H18.5" fill="none" stroke="#cfcfcf" stroke-width="1"/><rect x="4.5" y="7.5" width="9" height="5" fill="#c6c6c6"/><path d="M2.6 6.2 L4.6 8 V12 L2.6 13.8 Z" fill="#c6c6c6"/><rect x="5.5" y="6" width="3.3" height="2" fill="#c6c6c6"/><rect x="9.3" y="6" width="3.3" height="2" fill="#c6c6c6"/><circle cx="15.5" cy="15.5" r="5.6" fill="#f4f4f4" stroke="#d0d0d0" stroke-width="1"/><circle cx="15.5" cy="12.8" r="1.1" fill="#c8c8c8"/><circle cx="15.5" cy="18.2" r="1.1" fill="#c8c8c8"/><circle cx="12.9" cy="15" r="1.1" fill="#c8c8c8"/><circle cx="18.1" cy="15" r="1.1" fill="#c8c8c8"/></svg></span></div>
<div class="c" style="left:699px;top:546px;width:92px;height:44px;padding-bottom:2px;color:#333">11-35</div>
<div class="c" style="left:793px;top:546px;width:130px;height:44px;padding-bottom:2px;color:#333">百家乐</div>
<div class="c" style="left:925px;top:546px;width:80px;height:44px;padding-bottom:2px;color:#333">AS1</div>
<div class="c" style="left:1007px;top:546px;width:147px;height:44px;padding-bottom:2px"><span style="color:#1a5fff">闲</span>(4)&nbsp;<span style="color:#ff0000">庄</span>(3)</div>
<div class="c" style="left:1156px;top:546px;width:106px;height:44px;padding-bottom:2px;color:#1a5fff">50.00</div>
<div class="c" style="left:1264px;top:546px;width:130px;height:44px;padding-bottom:2px;color:#333">50.00</div>
<div class="c" style="left:1396px;top:546px;width:114px;height:44px;padding-bottom:2px;color:#333">50.00</div>
<div class="c" style="left:1512px;top:546px;width:373px;height:44px;padding-bottom:2px;color:#333">610.82/660.82</div>
<div class="c" style="left:14px;top:592px;width:259px;height:43px;padding-bottom:2px;color:#333">2025-12-21 06:19:20</div>
<div class="c" style="left:275px;top:592px;width:195px;height:43px;padding-bottom:2px;color:#333">523058678310</div>
<div class="c" style="left:472px;top:592px;width:225px;height:43px;padding-bottom:2px"><span>670928827</span><span style="display:inline-block;position:relative;width:30px;height:30px;margin-left:4px;border:1px solid #eee;border-radius:4px;background:#fafafa"><svg style="position:absolute;left:4px;top:4px" width="22" height="22" viewBox="0 0 22 22"><path d="M1.5 1 H13 L18.5 6 V20.5 H1.5 Z" fill="#f4f4f4" stroke="#cfcfcf" stroke-width="1"/><path d="M13 1 V6 H18.5" fill="none" stroke="#cfcfcf" stroke-width="1"/><rect x="4.5" y="7.5" width="9" height="5" fill="#c6c6c6"/><path d="M2.6 6.2 L4.6 8 V12 L2.6 13.8 Z" fill="#c6c6c6"/><rect x="5.5" y="6" width="3.3" height="2" fill="#c6c6c6"/><rect x="9.3" y="6" width="3.3" height="2" fill="#c6c6c6"/><circle cx="15.5" cy="15.5" r="5.6" fill="#f4f4f4" stroke="#d0d0d0" stroke-width="1"/><circle cx="15.5" cy="12.8" r="1.1" fill="#c8c8c8"/><circle cx="15.5" cy="18.2" r="1.1" fill="#c8c8c8"/><circle cx="12.9" cy="15" r="1.1" fill="#c8c8c8"/><circle cx="18.1" cy="15" r="1.1" fill="#c8c8c8"/></svg></span></div>
<div class="c" style="left:699px;top:592px;width:92px;height:43px;padding-bottom:2px;color:#333">11-34</div>
<div class="c" style="left:793px;top:592px;width:130px;height:43px;padding-bottom:2px;color:#333">百家乐</div>
<div class="c" style="left:925px;top:592px;width:80px;height:43px;padding-bottom:2px;color:#333">AS1</div>
<div class="c" style="left:1007px;top:592px;width:147px;height:43px;padding-bottom:2px"><span style="color:#1a5fff">闲</span>(9)&nbsp;<span style="color:#ff0000">庄</span>(5)</div>
<div class="c" style="left:1156px;top:592px;width:106px;height:43px;padding-bottom:2px;color:#1a5fff">50.00</div>
<div class="c" style="left:1264px;top:592px;width:130px;height:43px;padding-bottom:2px;color:#333">50.00</div>
<div class="c" style="left:1396px;top:592px;width:114px;height:43px;padding-bottom:2px;color:#333">50.00</div>
<div class="c" style="left:1512px;top:592px;width:373px;height:43px;padding-bottom:2px;color:#333">560.82/610.82</div>
<div class="c" style="left:14px;top:637px;width:259px;height:43px;padding-bottom:2px;color:#333">2025-12-21 06:18:49</div>
<div class="c" style="left:275px;top:637px;width:195px;height:43px;padding-bottom:2px;color:#333">523058677247</div>
<div class="c" style="left:472px;top:637px;width:225px;height:43px;padding-bottom:2px"><span>670928733</span><span style="display:inline-block;position:relative;width:30px;height:30px;margin-left:4px;border:1px solid #eee;border-radius:4px;background:#fafafa"><svg style="position:absolute;left:4px;top:4px" width="22" height="22" viewBox="0 0 22 22"><path d="M1.5 1 H13 L18.5 6 V20.5 H1.5 Z" fill="#f4f4f4" stroke="#cfcfcf" stroke-width="1"/><path d="M13 1 V6 H18.5" fill="none" stroke="#cfcfcf" stroke-width="1"/><rect x="4.5" y="7.5" width="9" height="5" fill="#c6c6c6"/><path d="M2.6 6.2 L4.6 8 V12 L2.6 13.8 Z" fill="#c6c6c6"/><rect x="5.5" y="6" width="3.3" height="2" fill="#c6c6c6"/><rect x="9.3" y="6" width="3.3" height="2" fill="#c6c6c6"/><circle cx="15.5" cy="15.5" r="5.6" fill="#f4f4f4" stroke="#d0d0d0" stroke-width="1"/><circle cx="15.5" cy="12.8" r="1.1" fill="#c8c8c8"/><circle cx="15.5" cy="18.2" r="1.1" fill="#c8c8c8"/><circle cx="12.9" cy="15" r="1.1" fill="#c8c8c8"/><circle cx="18.1" cy="15" r="1.1" fill="#c8c8c8"/></svg></span></div>
<div class="c" style="left:699px;top:637px;width:92px;height:43px;padding-bottom:2px;color:#333">11-33</div>
<div class="c" style="left:793px;top:637px;width:130px;height:43px;padding-bottom:2px;color:#333">百家乐</div>
<div class="c" style="left:925px;top:637px;width:80px;height:43px;padding-bottom:2px;color:#333">AS1</div>
<div class="c" style="left:1007px;top:637px;width:147px;height:43px;padding-bottom:2px"><span style="color:#1a5fff">闲</span>(8)&nbsp;<span style="color:#ff0000">庄</span>(7)</div>
<div class="c" style="left:1156px;top:637px;width:106px;height:43px;padding-bottom:2px;color:#1a5fff">50.00</div>
<div class="c" style="left:1264px;top:637px;width:130px;height:43px;padding-bottom:2px;color:#333">50.00</div>
<div class="c" style="left:1396px;top:637px;width:114px;height:43px;padding-bottom:2px;color:#ff0000">-50.00</div>
<div class="c" style="left:1512px;top:637px;width:373px;height:43px;padding-bottom:2px;color:#333">610.82/560.82</div>
<div class="c" style="left:14px;top:682px;width:259px;height:44px;padding-bottom:2px;color:#333">2025-12-21 06:18:13</div>
<div class="c" style="left:275px;top:682px;width:195px;height:44px;padding-bottom:2px;color:#333">523058676120</div>
<div class="c" style="left:472px;top:682px;width:225px;height:44px;padding-bottom:2px"><span>670928632</span><span style="display:inline-block;position:relative;width:30px;height:30px;margin-left:4px;border:1px solid #eee;border-radius:4px;background:#fafafa"><svg style="position:absolute;left:4px;top:4px" width="22" height="22" viewBox="0 0 22 22"><path d="M1.5 1 H13 L18.5 6 V20.5 H1.5 Z" fill="#f4f4f4" stroke="#cfcfcf" stroke-width="1"/><path d="M13 1 V6 H18.5" fill="none" stroke="#cfcfcf" stroke-width="1"/><rect x="4.5" y="7.5" width="9" height="5" fill="#c6c6c6"/><path d="M2.6 6.2 L4.6 8 V12 L2.6 13.8 Z" fill="#c6c6c6"/><rect x="5.5" y="6" width="3.3" height="2" fill="#c6c6c6"/><rect x="9.3" y="6" width="3.3" height="2" fill="#c6c6c6"/><circle cx="15.5" cy="15.5" r="5.6" fill="#f4f4f4" stroke="#d0d0d0" stroke-width="1"/><circle cx="15.5" cy="12.8" r="1.1" fill="#c8c8c8"/><circle cx="15.5" cy="18.2" r="1.1" fill="#c8c8c8"/><circle cx="12.9" cy="15" r="1.1" fill="#c8c8c8"/><circle cx="18.1" cy="15" r="1.1" fill="#c8c8c8"/></svg></span></div>
<div class="c" style="left:699px;top:682px;width:92px;height:44px;padding-bottom:2px;color:#333">11-32</div>
<div class="c" style="left:793px;top:682px;width:130px;height:44px;padding-bottom:2px;color:#333">百家乐</div>
<div class="c" style="left:925px;top:682px;width:80px;height:44px;padding-bottom:2px;color:#333">AS1</div>
<div class="c" style="left:1007px;top:682px;width:147px;height:44px;padding-bottom:2px"><span style="color:#1a5fff">闲</span>(9)&nbsp;<span style="color:#ff0000">庄</span>(2)</div>
<div class="c" style="left:1156px;top:682px;width:106px;height:44px;padding-bottom:2px;color:#1a5fff">50.00</div>
<div class="c" style="left:1264px;top:682px;width:130px;height:44px;padding-bottom:2px;color:#333">50.00</div>
<div class="c" style="left:1396px;top:682px;width:114px;height:44px;padding-bottom:2px;color:#ff0000">-50.00</div>
<div class="c" style="left:1512px;top:682px;width:373px;height:44px;padding-bottom:2px;color:#333">660.82/610.82</div>
<div class="c" style="left:14px;top:728px;width:259px;height:42px;padding-bottom:2px;color:#333">2025-12-21 06:17:36</div>
<div class="c" style="left:275px;top:728px;width:195px;height:42px;padding-bottom:2px;color:#333">523058675029</div>
<div class="c" style="left:472px;top:728px;width:225px;height:42px;padding-bottom:2px"><span>670928534</span><span style="display:inline-block;position:relative;width:30px;height:30px;margin-left:4px;border:1px solid #eee;border-radius:4px;background:#fafafa"><svg style="position:absolute;left:4px;top:4px" width="22" height="22" viewBox="0 0 22 22"><path d="M1.5 1 H13 L18.5 6 V20.5 H1.5 Z" fill="#f4f4f4" stroke="#cfcfcf" stroke-width="1"/><path d="M13 1 V6 H18.5" fill="none" stroke="#cfcfcf" stroke-width="1"/><rect x="4.5" y="7.5" width="9" height="5" fill="#c6c6c6"/><path d="M2.6 6.2 L4.6 8 V12 L2.6 13.8 Z" fill="#c6c6c6"/><rect x="5.5" y="6" width="3.3" height="2" fill="#c6c6c6"/><rect x="9.3" y="6" width="3.3" height="2" fill="#c6c6c6"/><circle cx="15.5" cy="15.5" r="5.6" fill="#f4f4f4" stroke="#d0d0d0" stroke-width="1"/><circle cx="15.5" cy="12.8" r="1.1" fill="#c8c8c8"/><circle cx="15.5" cy="18.2" r="1.1" fill="#c8c8c8"/><circle cx="12.9" cy="15" r="1.1" fill="#c8c8c8"/><circle cx="18.1" cy="15" r="1.1" fill="#c8c8c8"/></svg></span></div>
<div class="c" style="left:699px;top:728px;width:92px;height:42px;padding-bottom:2px;color:#333">11-31</div>
<div class="c" style="left:793px;top:728px;width:130px;height:42px;padding-bottom:2px;color:#333">百家乐</div>
<div class="c" style="left:925px;top:728px;width:80px;height:42px;padding-bottom:2px;color:#333">AS1</div>
<div class="c" style="left:1007px;top:728px;width:147px;height:42px;padding-bottom:2px"><span style="color:#1a5fff">闲</span>(5)&nbsp;<span style="color:#ff0000">庄</span>(6)</div>
<div class="c" style="left:1156px;top:728px;width:106px;height:42px;padding-bottom:2px;color:#1a5fff">50.00</div>
<div class="c" style="left:1264px;top:728px;width:130px;height:42px;padding-bottom:2px;color:#333">50.00</div>
<div class="c" style="left:1396px;top:728px;width:114px;height:42px;padding-bottom:2px;color:#333">47.50</div>
<div class="c" style="left:1512px;top:728px;width:373px;height:42px;padding-bottom:2px;color:#333">613.32/660.82</div>
<div class="a" style="left:13px;top:770px;width:1873px;height:30px;background:#999;"></div>
<div class="a" style="left:273px;top:770px;width:2px;height:30px;background:#ddd"></div>
<div class="a" style="left:470px;top:770px;width:2px;height:30px;background:#ddd"></div>
<div class="a" style="left:697px;top:770px;width:2px;height:30px;background:#ddd"></div>
<div class="a" style="left:791px;top:770px;width:2px;height:30px;background:#ddd"></div>
<div class="a" style="left:923px;top:770px;width:2px;height:30px;background:#ddd"></div>
<div class="a" style="left:1005px;top:770px;width:2px;height:30px;background:#ddd"></div>
<div class="a" style="left:1154px;top:770px;width:2px;height:30px;background:#ddd"></div>
<div class="a" style="left:1262px;top:770px;width:2px;height:30px;background:#ddd"></div>
<div class="a" style="left:1394px;top:770px;width:2px;height:30px;background:#ddd"></div>
<div class="a" style="left:1510px;top:770px;width:2px;height:30px;background:#ddd"></div>
<div class="c hd" style="left:14px;top:770px;width:259px;height:30px">小计</div>
<div class="c hd" style="left:275px;top:770px;width:195px;height:30px">13</div>
<div class="c hd" style="left:1156px;top:770px;width:106px;height:30px">850.00</div>
<div class="c hd" style="left:1264px;top:770px;width:130px;height:30px">750.00</div>
<div class="c hd" style="left:1396px;top:770px;width:114px;height:30px">145.00</div>
<div class="a" style="left:13px;top:802px;width:1873px;height:30px;background:#999;border-radius:0 0 3px 3px"></div>
<div class="a" style="left:273px;top:802px;width:2px;height:30px;background:#ddd"></div>
<div class="a" style="left:470px;top:802px;width:2px;height:30px;background:#ddd"></div>
<div class="a" style="left:697px;top:802px;width:2px;height:30px;background:#ddd"></div>
<div class="a" style="left:791px;top:802px;width:2px;height:30px;background:#ddd"></div>
<div class="a" style="left:923px;top:802px;width:2px;height:30px;background:#ddd"></div>
<div class="a" style="left:1005px;top:802px;width:2px;height:30px;background:#ddd"></div>
<div class="a" style="left:1154px;top:802px;width:2px;height:30px;background:#ddd"></div>
<div class="a" style="left:1262px;top:802px;width:2px;height:30px;background:#ddd"></div>
<div class="a" style="left:1394px;top:802px;width:2px;height:30px;background:#ddd"></div>
<div class="a" style="left:1510px;top:802px;width:2px;height:30px;background:#ddd"></div>
<div class="c hd" style="left:14px;top:802px;width:259px;height:30px">总计</div>
<div class="c hd" style="left:275px;top:802px;width:195px;height:30px">13</div>
<div class="c hd" style="left:1156px;top:802px;width:106px;height:30px">850.00</div>
<div class="c hd" style="left:1264px;top:802px;width:130px;height:30px">750.00</div>
<div class="c hd" style="left:1396px;top:802px;width:114px;height:30px">145.00</div>
<div class="a" style="left:13px;top:800px;width:1873px;height:2px;background:#ddd"></div>
<div class="a" style="left:1899px;top:0;width:20px;height:848px;background:#f1f1f1;border-left:1px solid #e8e8e8"></div>
<svg class="a" style="left:1905px;top:8px" width="10" height="7" viewBox="0 0 10 7"><path d="M0.5 6.2 L5 1 L9.5 6.2 Z" fill="#505050"/></svg>
<div class="a" style="left:1901px;top:79px;width:17px;height:769px;background:#c1c1c1"></div>
</div>
</body></html>
